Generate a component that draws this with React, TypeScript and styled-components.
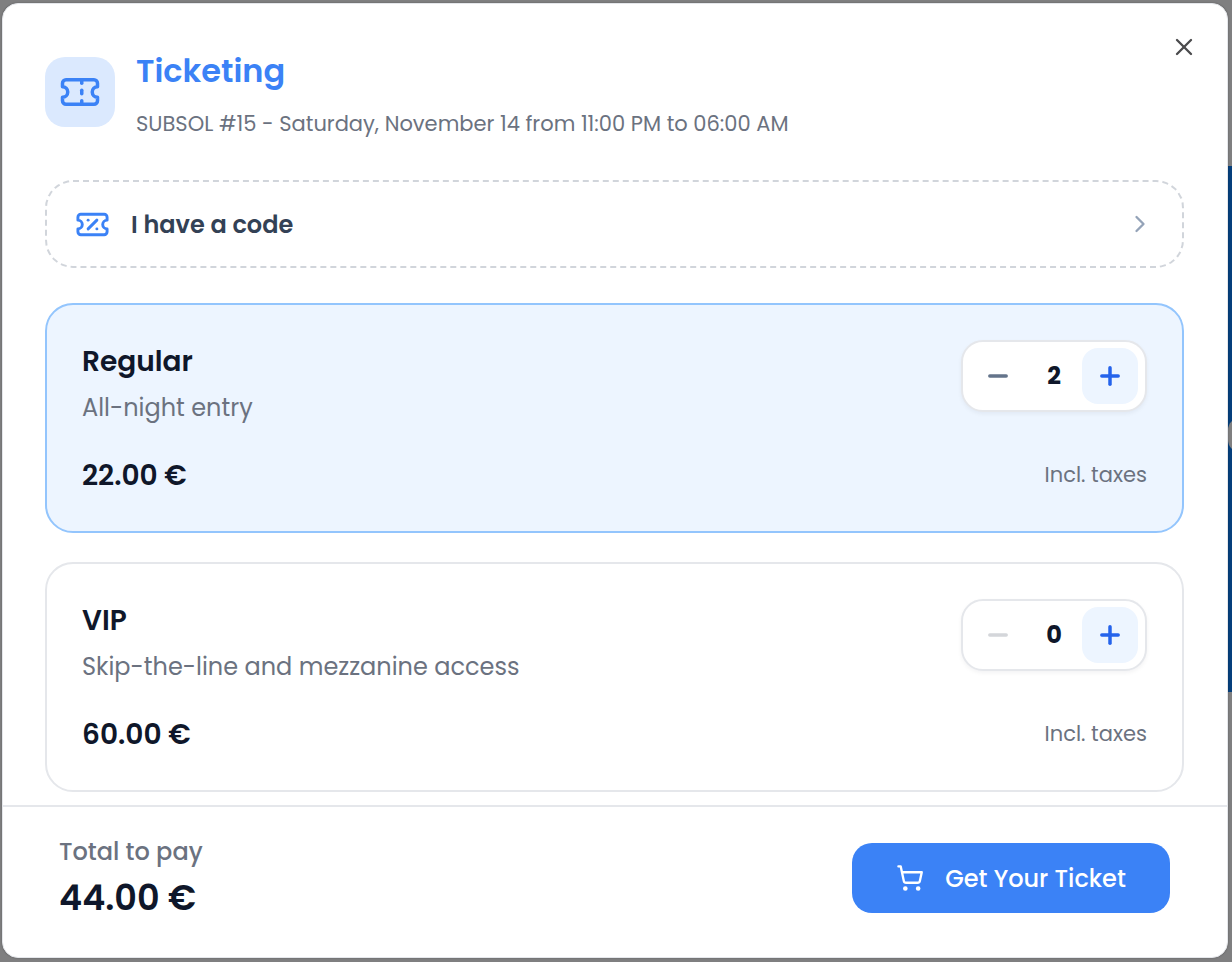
import React, { useState } from "react";
import styled, { createGlobalStyle } from "styled-components";
import { ChevronRight, Minus, Plus, ShoppingCart, Ticket, TicketPercent, X } from "lucide-react";

const GlobalStyle = createGlobalStyle`
  *, *::before, *::after { box-sizing: border-box; }
  body {
    margin: 0;
    background: #7f7f80;
    color: #0f172a;
    font-family: Poppins, Inter, "Liberation Sans", sans-serif;
  }
  button { font: inherit; cursor: pointer; }
  h1, h2, p { margin: 0; }
`;

const Backdrop = styled.div`
  position: relative;
  display: flex;
  height: 100vh;
  padding: 3px 4px 4px 2px;
  overflow: hidden;
`;

const Banner = styled.div`
  position: absolute;
  top: 166px;
  right: 0;
  width: 160px;
  height: 526px;
  background: #053f7c;
`;

const BannerArrow = styled.span`
  position: absolute;
  top: 252px;
  right: -30px;
  width: 34px;
  height: 34px;
  border-radius: 12px;
  background: #7f7f80;
`;

const Dialog = styled.section`
  position: relative;
  flex: 1;
  display: flex;
  flex-direction: column;
  min-width: 0;
  border: 1px solid #e5e7eb;
  border-radius: 16px;
  background: #fff;
  box-shadow: 0 0 2px rgba(0, 0, 0, 0.3);
  overflow: hidden;
`;

const CloseButton = styled.button`
  position: absolute;
  top: 23px;
  right: 23px;
  display: grid;
  place-items: center;
  width: 40px;
  height: 40px;
  padding: 0;
  border: 0;
  border-radius: 12px;
  background: none;
  color: #4b4b4d;
`;

const Body = styled.div`
  flex: 1;
  min-height: 0;
  padding: 43px 43px 0 42px;
  overflow: hidden;
`;

const Header = styled.header`
  display: flex;
  gap: 21px;
  padding-right: 60px;
  margin-bottom: 38px;
`;

const IconTile = styled.span`
  flex: none;
  display: grid;
  place-items: center;
  width: 70px;
  height: 70px;
  margin-top: 10px;
  border-radius: 20px;
  background: #dbe9fe;
  color: #3b82f6;
`;

const Title = styled.h1`
  font-size: 32px;
  font-weight: 600;
  line-height: 48px;
  color: #3b82f6;
`;

const Subtitle = styled.p`
  margin-top: 11px;
  font-size: 21px;
  line-height: 36px;
  color: #6b7280;
`;

const CodeButton = styled.button`
  display: flex;
  align-items: center;
  gap: 21px;
  width: 100%;
  height: 88px;
  margin-bottom: 35px;
  padding: 0 28px;
  border: 2px dashed #d1d5db;
  border-radius: 28px;
  background: #fff;
  color: #334155;
  font-size: 24px;
  font-weight: 600;
  text-align: left;

  svg:first-child { color: #3b82f6; }
  svg:last-child { color: #94a3b8; }
`;

const CodeLabel = styled.span`
  flex: 1;
`;

const TicketList = styled.div`
  display: flex;
  flex-direction: column;
  gap: 29px;
`;

const TicketCard = styled.article<{ $selected: boolean }>`
  display: flex;
  flex-direction: column;
  justify-content: space-between;
  height: 230px;
  padding: 35px;
  border: 2px solid ${(p) => (p.$selected ? "#93c5fd" : "#e5e7eb")};
  border-radius: 28px;
  background: ${(p) => (p.$selected ? "#edf5ff" : "#fff")};
`;

const CardRow = styled.div`
  display: flex;
  justify-content: space-between;
  align-items: flex-start;
`;

const TicketName = styled.h2`
  font-size: 28px;
  font-weight: 600;
  line-height: 44px;
`;

const Description = styled.p`
  margin-top: 4px;
  font-size: 24px;
  line-height: 40px;
  color: #6b7280;
`;

const Price = styled.p`
  font-size: 28px;
  font-weight: 600;
  line-height: 40px;
`;

const TaxNote = styled.p`
  font-size: 21px;
  line-height: 38px;
  color: #6b7280;
`;

const Stepper = styled.div`
  flex: none;
  display: flex;
  align-items: center;
  padding: 6px 7px;
  border: 2px solid #e5e7eb;
  border-radius: 22px;
  background: #fff;
  box-shadow: 0 2px 4px rgba(15, 23, 42, 0.05);
`;

const StepButton = styled.button<{ $primary?: boolean }>`
  display: grid;
  place-items: center;
  width: 56px;
  height: 56px;
  padding: 0;
  border: 0;
  border-radius: 16px;
  background: ${(p) => (p.$primary ? "#edf5ff" : "none")};
  color: ${(p) => (p.$primary ? "#2563eb" : "#64748b")};

  &:disabled { color: #d4d6da; cursor: default; }
`;

const Quantity = styled.output`
  width: 56px;
  font-size: 24px;
  font-weight: 700;
  line-height: 40px;
  text-align: center;
`;

const Footer = styled.footer`
  flex: none;
  display: flex;
  justify-content: space-between;
  align-items: center;
  height: 152px;
  padding: 0 57px 8px 56px;
  border-top: 2px solid #e5e7eb;
`;

const TotalLabel = styled.p`
  font-size: 24px;
  font-weight: 500;
  line-height: 40px;
  color: #6b7280;
`;

const TotalAmount = styled.p`
  font-size: 35px;
  font-weight: 600;
  line-height: 52px;
`;

const PayButton = styled.button`
  display: flex;
  align-items: center;
  justify-content: center;
  gap: 21px;
  min-width: 318px;
  height: 70px;
  padding: 0 40px;
  border: 0;
  border-radius: 20px;
  background: #3b82f6;
  color: #fff;
  font-size: 24px;
  font-weight: 500;
`;

type Offer = { id: string; name: string; description: string; price: number };

const offers: Offer[] = [
  { id: "regular", name: "Regular", description: "All-night entry", price: 22 },
  { id: "vip", name: "VIP", description: "Skip-the-line and mezzanine access", price: 60 },
];

const euros = (value: number) => `${value.toFixed(2)} €`;

export default function App() {
  const [counts, setCounts] = useState<Record<string, number>>({ regular: 2, vip: 0 });
  const change = (id: string, by: number) =>
    setCounts((c) => ({ ...c, [id]: Math.max(0, c[id] + by) }));
  const total = offers.reduce((sum, o) => sum + o.price * counts[o.id], 0);

  return (
    <>
      <GlobalStyle />
      <Backdrop>
        <Banner>
          <BannerArrow />
        </Banner>
        <Dialog role="dialog" aria-labelledby="dialog-title">
          <Body>
            <Header>
              <IconTile>
                <Ticket size={42} />
              </IconTile>
              <div>
                <Title id="dialog-title">Ticketing</Title>
                <Subtitle>SUBSOL #15 - Saturday, November 14 from 11:00 PM to 06:00 AM</Subtitle>
              </div>
            </Header>
            <CodeButton type="button">
              <TicketPercent size={35} />
              <CodeLabel>I have a code</CodeLabel>
              <ChevronRight size={28} />
            </CodeButton>
            <TicketList>
              {offers.map((o) => (
                <TicketCard key={o.id} $selected={counts[o.id] > 0}>
                  <CardRow>
                    <div>
                      <TicketName>{o.name}</TicketName>
                      <Description>{o.description}</Description>
                    </div>
                    <Stepper>
                      <StepButton
                        type="button"
                        aria-label={`Remove one ${o.name}`}
                        disabled={counts[o.id] === 0}
                        onClick={() => change(o.id, -1)}
                      >
                        <Minus size={28} strokeWidth={3} />
                      </StepButton>
                      <Quantity>{counts[o.id]}</Quantity>
                      <StepButton
                        type="button"
                        $primary
                        aria-label={`Add one ${o.name}`}
                        onClick={() => change(o.id, 1)}
                      >
                        <Plus size={28} strokeWidth={3} />
                      </StepButton>
                    </Stepper>
                  </CardRow>
                  <CardRow>
                    <Price>{euros(o.price)}</Price>
                    <TaxNote>Incl. taxes</TaxNote>
                  </CardRow>
                </TicketCard>
              ))}
            </TicketList>
          </Body>
          <Footer>
            <div>
              <TotalLabel>Total to pay</TotalLabel>
              <TotalAmount>{euros(total)}</TotalAmount>
            </div>
            <PayButton type="button">
              <ShoppingCart size={28} />
              Get Your Ticket
            </PayButton>
          </Footer>
          <CloseButton type="button" aria-label="Close">
            <X size={28} />
          </CloseButton>
        </Dialog>
      </Backdrop>
    </>
  );
}
